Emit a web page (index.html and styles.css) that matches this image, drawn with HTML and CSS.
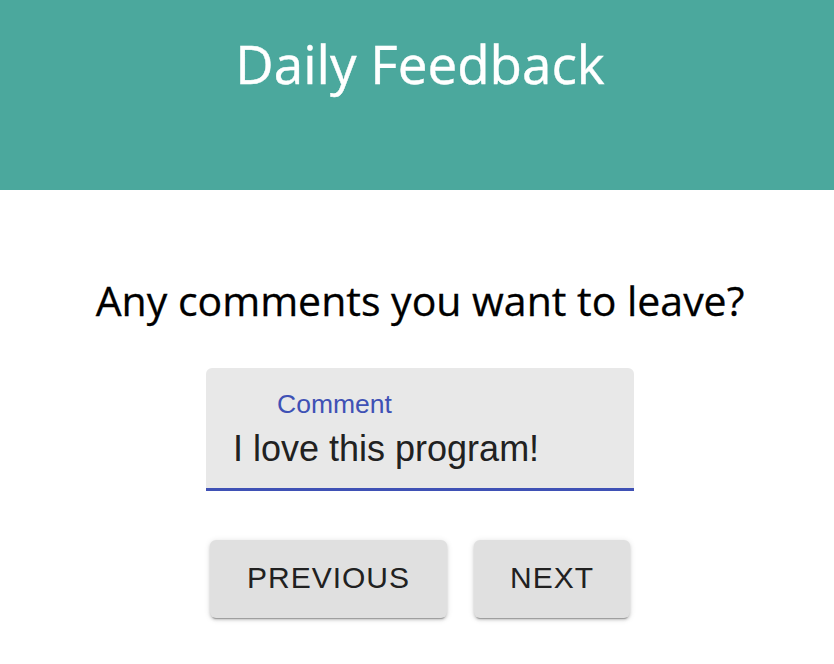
FILE: index.html
```html
<!DOCTYPE html>
<html>
<head>
<meta charset="utf-8">
<link rel="stylesheet" href="styles.css">
</head>
<body>
<header class="header">
  <h1 class="title">Daily Feedback</h1>
</header>
<main class="main">
  <h2 class="question">Any comments you want to leave?</h2>
  <div class="field">
    <label class="field-label">Comment</label>
    <div class="field-value">I love this program!</div>
  </div>
  <div class="actions">
    <button class="btn btn-prev">PREVIOUS</button>
    <button class="btn btn-next">NEXT</button>
  </div>
</main>
</body>
</html>
```
FILE: styles.css
```css
html, body { margin: 0; padding: 0; background: #fff; }
body { width: 834px; height: 664px; overflow: hidden; font-family: "Open Sans", sans-serif; }
.header {
  background: #4ba89d;
  height: 190px;
  display: flex;
  justify-content: center;
  padding-left: 6px;
  box-sizing: border-box;
}
.title {
  margin: 0;
  margin-top: 28px;
  color: #fff;
  font-weight: 500;
  font-size: 53px;
  line-height: 72px;
  -webkit-text-stroke: 0.4px #fff;
}
.main {
  display: flex;
  flex-direction: column;
  align-items: center;
  padding-left: 6px;
}
.question {
  margin: 0;
  margin-top: 82px;
  font-weight: 500;
  font-size: 41px;
  line-height: 56px;
  color: #000;
  -webkit-text-stroke: 0.3px #000;
}
.field {
  margin-top: 40px;
  width: 428px;
  height: 123px;
  box-sizing: border-box;
  background: #e8e8e8;
  border-radius: 6px 6px 0 0;
  border-bottom: 3px solid #3f51b5;
  font-family: "Liberation Sans", Arial, sans-serif;
  padding: 21px 0 0 27px;
}
.field-label {
  display: block;
  color: #3f51b5;
  font-size: 26.5px;
  line-height: 30px;
  margin-left: 44px;
}
.field-value {
  color: #212121;
  font-size: 36px;
  line-height: 42px;
  margin-top: 9px;
}
.actions {
  display: flex;
  gap: 27px;
  margin-top: 49px;
}
.btn {
  height: 78px;
  border: none;
  border-radius: 6px;
  background: #e0e0e0;
  font-family: "Liberation Sans", Arial, sans-serif;
  font-size: 30px;
  letter-spacing: 1px;
  color: #212121;
  box-shadow: 0 3px 1px -2px rgba(0,0,0,0.25), 0 2px 3px 0 rgba(0,0,0,0.16), 0 1px 6px 0 rgba(0,0,0,0.12);
  padding: 0 0 2px 0;
}
.btn-prev { width: 237px; }
.btn-next { width: 156px; }
```
